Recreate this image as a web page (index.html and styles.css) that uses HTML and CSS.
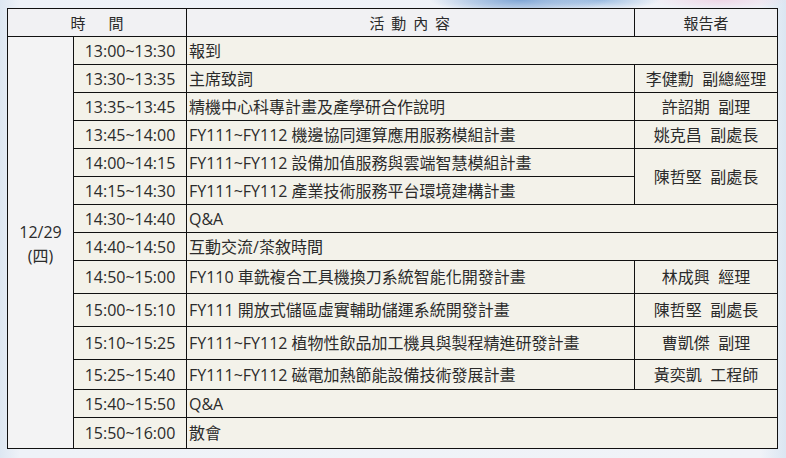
FILE: index.html
```html
<!DOCTYPE html>
<html lang="zh-Hant">
<head>
<meta charset="utf-8">
<link rel="stylesheet" href="styles.css">
</head>
<body>
<div class="page">
<table class="agenda">
  <colgroup>
    <col class="c-date"><col class="c-time"><col class="c-act"><col class="c-rep">
  </colgroup>
  <thead>
    <tr class="head">
      <th colspan="2"><span class="h-time">時　&nbsp; 間</span></th>
      <th><span class="h-act">活 動 內 容</span></th>
      <th>報告者</th>
    </tr>
  </thead>
  <tbody>
    <tr class="r">
      <td class="date" rowspan="14">12/29<br>(四)</td>
      <td class="time">13:00~13:30</td>
      <td class="act" colspan="2">報到</td>
    </tr>
    <tr class="r">
      <td class="time">13:30~13:35</td>
      <td class="act">主席致詞</td>
      <td class="rep">李健勳&nbsp; 副總經理</td>
    </tr>
    <tr class="r">
      <td class="time">13:35~13:45</td>
      <td class="act">精機中心科專計畫及產學研合作說明</td>
      <td class="rep">許詔期&nbsp; 副理</td>
    </tr>
    <tr class="r">
      <td class="time">13:45~14:00</td>
      <td class="act">FY111~FY112 機邊協同運算應用服務模組計畫</td>
      <td class="rep">姚克昌&nbsp; 副處長</td>
    </tr>
    <tr class="r">
      <td class="time">14:00~14:15</td>
      <td class="act">FY111~FY112 設備加值服務與雲端智慧模組計畫</td>
      <td class="rep" rowspan="2">陳哲堅&nbsp; 副處長</td>
    </tr>
    <tr class="r">
      <td class="time">14:15~14:30</td>
      <td class="act">FY111~FY112 產業技術服務平台環境建構計畫</td>
    </tr>
    <tr class="r">
      <td class="time">14:30~14:40</td>
      <td class="act" colspan="2">Q&amp;A</td>
    </tr>
    <tr class="r">
      <td class="time">14:40~14:50</td>
      <td class="act" colspan="2">互動交流/茶敘時間</td>
    </tr>
    <tr class="r tall">
      <td class="time">14:50~15:00</td>
      <td class="act">FY110 車銑複合工具機換刀系統智能化開發計畫</td>
      <td class="rep">林成興&nbsp; 經理</td>
    </tr>
    <tr class="r tall">
      <td class="time">15:00~15:10</td>
      <td class="act">FY111 開放式儲區虛實輔助儲運系統開發計畫</td>
      <td class="rep">陳哲堅&nbsp; 副處長</td>
    </tr>
    <tr class="r tall">
      <td class="time">15:10~15:25</td>
      <td class="act">FY111~FY112 植物性飲品加工機具與製程精進研發計畫</td>
      <td class="rep">曹凱傑&nbsp; 副理</td>
    </tr>
    <tr class="r mid">
      <td class="time">15:25~15:40</td>
      <td class="act">FY111~FY112 磁電加熱節能設備技術發展計畫</td>
      <td class="rep">黃奕凱&nbsp; 工程師</td>
    </tr>
    <tr class="r">
      <td class="time">15:40~15:50</td>
      <td class="act" colspan="2">Q&amp;A</td>
    </tr>
    <tr class="r last">
      <td class="time">15:50~16:00</td>
      <td class="act" colspan="2">散會</td>
    </tr>
  </tbody>
</table>
</div>
</body>
</html>
```
FILE: styles.css
```css
html, body {
  margin: 0;
  padding: 0;
}
body {
  width: 786px;
  height: 458px;
  overflow: hidden;
  background-color: #e9eef5;
  background-image:
    radial-gradient(ellipse 90px 14px at 520px 0px, #7fa6d6 0%, rgba(127,166,214,0.5) 55%, rgba(127,166,214,0) 100%),
    radial-gradient(ellipse 60px 10px at 600px 0px, #9cbde2 0%, rgba(156,189,226,0) 100%),
    radial-gradient(ellipse 70px 10px at 720px 0px, #efd6e6 0%, rgba(239,214,230,0) 100%),
    linear-gradient(to right, #dde7f2 0px, #eef2f8 20px, #f0f3f8 760px, #dbe6f2 786px);
  font-family: "Open Sans", "Noto Sans CJK TC", sans-serif;
  color: #2b2b2b;
}
.page {
  padding: 8px 0 0 7px;
}
.agenda {
  border-collapse: collapse;
  table-layout: fixed;
  width: 770px;
  font-size: 16px;
}
.c-date { width: 66px; }
.c-time { width: 113px; }
.c-act { width: 448px; }
.c-rep { width: 143px; }
.agenda th,
.agenda td {
  border: 1px solid #111;
  padding: 0;
  line-height: 20px;
  white-space: nowrap;
  overflow: hidden;
}
.head th {
  height: 27px;
  background: #f1f1f3;
  font-weight: normal;
  font-size: 15px;
  text-align: center;
  vertical-align: middle;
}
.h-act {
  letter-spacing: 1.5px;
}
.r td {
  height: 27px;
  background: #f3f2ea;
}
.r.tall td { height: 32px; }
.r.mid td { height: 29px; }
.r.last td { height: 30px; }
.agenda td.date {
  background: #f3f3f4;
  text-align: center;
  vertical-align: middle;
  line-height: 24px;
  padding-top: 2px;
}
.time {
  text-align: center;
}
.agenda td.act {
  padding-left: 2px;
}
.rep {
  text-align: center;
}
```
